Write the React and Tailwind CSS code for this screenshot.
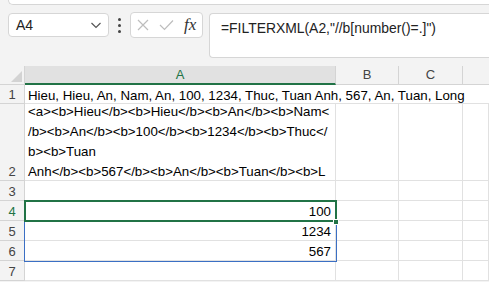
import React from 'react';

const rowHead = 'w-[25px] shrink-0 flex items-end justify-center text-[13px] text-[#444] bg-[#f3f3f3] border-r border-b border-[#d4d4d4]';
const cell = 'shrink-0 border-r border-b border-[#e1e1e1] bg-white';

const Row = ({ num, h = 'h-[20px]', active = false, a = null, right = false }) => (
  <div className={`flex ${h}`}>
    <div className={`${rowHead} ${active ? 'bg-[#e1e1e1] text-[#217346]' : ''}`}>
      <span className="translate-y-[1px]">{num}</span>
    </div>
    <div className={`${cell} w-[311px] flex flex-col justify-end overflow-hidden px-[3px] leading-[20px] ${right ? 'items-end pr-[4px]' : ''}`}>
      <div className="translate-y-[2px]">{a}</div>
    </div>
    <div className={`${cell} w-[63px]`}></div>
    <div className={`${cell} w-[64px]`}></div>
    <div className={`${cell} flex-1`}></div>
  </div>
);

export default function App() {
  return (
    <div className="w-[489px] h-[282px] overflow-hidden bg-[#f3f3f3] font-['Liberation_Sans',sans-serif] text-[13.3px] text-black">
      {/* ribbon edge */}
      <div className="ml-[8px] h-[5px] bg-white border-l border-b border-[#d6d6d6] rounded-bl-[7px]"></div>

      {/* formula bar */}
      <div className="h-[61px] flex items-start pt-[8px] pl-[8px]">
        <div className="w-[101px] h-[24px] bg-white border border-[#d6d6d6] rounded-[4px] flex items-center justify-between pl-[7px] pr-[6px]">
          <span className="text-[14px] text-[#222]">A4</span>
          <svg width="12" height="8" viewBox="0 0 12 8" fill="none" stroke="#555" strokeWidth="1.2">
            <path d="M1.5 2l4.5 4.5L10.5 2" />
          </svg>
        </div>
        <div className="w-[21px] h-[24px] flex flex-col items-center justify-center gap-[3px]">
          <span className="w-[3px] h-[3px] rounded-full bg-[#444]"></span>
          <span className="w-[3px] h-[3px] rounded-full bg-[#444]"></span>
          <span className="w-[3px] h-[3px] rounded-full bg-[#444]"></span>
        </div>
        <div className="w-[73px] h-[26px] -mt-[1px] bg-white border border-[#d6d6d6] rounded-[4px] flex items-center pl-[6px] gap-[10px]">
          <svg width="12" height="12" viewBox="0 0 12 12" stroke="#bdbdbd" strokeWidth="1.2" fill="none">
            <path d="M1 1l10 10M11 1L1 11" />
          </svg>
          <svg width="15" height="12" viewBox="0 0 15 12" stroke="#bdbdbd" strokeWidth="1.2" fill="none">
            <path d="M1 6l4.5 4.5L14 1.5" />
          </svg>
          <span className="font-['Liberation_Serif',serif] italic text-[17px] text-[#333] leading-none -mt-[2px]">fx</span>
        </div>
        <div className="ml-[6px] flex-1 h-[45px] bg-white border border-[#d6d6d6] border-r-0 rounded-l-[4px] pl-[11px] pt-[4px] text-[13.9px] text-[#222]">
          =FILTERXML(A2,"//b[number()=.]")
        </div>
      </div>

      {/* grid */}
      <div className="relative">
        <div className="flex h-[19px]">
          <div className="w-[25px] shrink-0 bg-[#f3f3f3] border-r border-b border-[#d4d4d4] relative">
            <svg className="absolute right-[2px] bottom-[2px]" width="11" height="11" viewBox="0 0 11 11">
              <path d="M11 0V11H0Z" fill="#d3d3d3" />
            </svg>
          </div>
          <div className="w-[311px] shrink-0 bg-[#e1e1e1] border-r border-[#d4d4d4] border-b-2 border-b-[#217346] flex items-center justify-center text-[13px] text-[#217346]">A</div>
          <div className="w-[63px] shrink-0 bg-[#f3f3f3] border-r border-b border-[#d4d4d4] flex items-center justify-center text-[13px] text-[#444]">B</div>
          <div className="w-[64px] shrink-0 bg-[#f3f3f3] border-r border-b border-[#d4d4d4] flex items-center justify-center text-[13px] text-[#444]">C</div>
          <div className="flex-1 bg-[#f3f3f3] border-b border-[#d4d4d4]"></div>
        </div>

        {/* row 1: text overflows into B:D */}
        <div className="flex h-[19px]">
          <div className={rowHead}>
            <span className="translate-y-[1px]">1</span>
          </div>
          <div className="flex-1 bg-white border-b border-[#e1e1e1] flex items-end px-[3px] leading-[19px] whitespace-nowrap">
            <span className="translate-y-[2px]">Hieu, Hieu, An, Nam, An, 100, 1234, Thuc, Tuan Anh, 567, An, Tuan, Long</span>
          </div>
        </div>
        <Row
          num="2"
          h="h-[77px]"
          a={
            <div className="whitespace-pre">
              <div>{'<a><b>Hieu</b><b>Hieu</b><b>An</b><b>Nam<'}</div>
              <div>{'/b><b>An</b><b>100</b><b>1234</b><b>Thuc</'}</div>
              <div>{'b><b>Tuan'}</div>
              <div>{'Anh</b><b>567</b><b>An</b><b>Tuan</b><b>L'}</div>
            </div>
          }
        />
        <Row num="3" />
        <Row num="4" active a="100" right />
        <Row num="5" a="1234" right />
        <Row num="6" a="567" right />
        <Row num="7" />

        {/* spill range */}
        <div className="absolute left-[24px] top-[135px] w-[313px] h-[61px] border border-[#3b6fc4] pointer-events-none"></div>
        {/* active cell */}
        <div className="absolute left-[24px] top-[134px] w-[313px] h-[22px] border-2 border-[#217346] pointer-events-none"></div>
        <div className="absolute left-[333px] top-[153px] w-[6px] h-[6px] bg-[#217346] border border-white"></div>
      </div>
    </div>
  );
}
